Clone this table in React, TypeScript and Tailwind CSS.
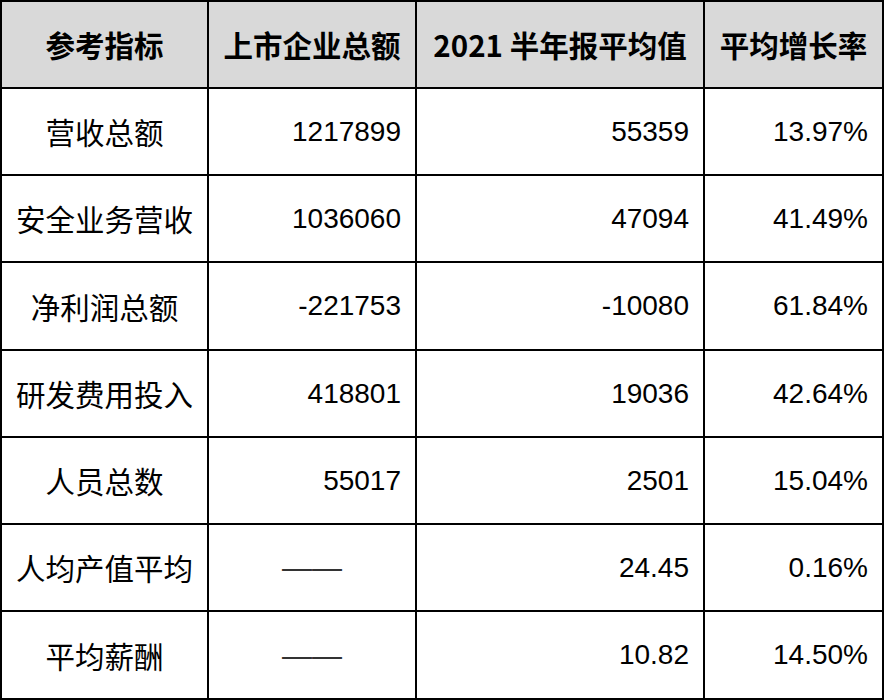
import React from "react";

const rows: [string, string, string, string][] = [
  ["营收总额", "1217899", "55359", "13.97%"],
  ["安全业务营收", "1036060", "47094", "41.49%"],
  ["净利润总额", "-221753", "-10080", "61.84%"],
  ["研发费用投入", "418801", "19036", "42.64%"],
  ["人员总数", "55017", "2501", "15.04%"],
  ["人均产值平均", "——", "24.45", "0.16%"],
  ["平均薪酬", "——", "10.82", "14.50%"],
];

const headers = ["参考指标", "上市企业总额", "2021 半年报平均值", "平均增长率"];

export default function App() {
  return (
    <div
      className="w-[884px] h-[700px] bg-white text-black"
      style={{ fontFamily: '"Liberation Sans", "Noto Sans CJK SC", sans-serif' }}
    >
      <div className="grid grid-cols-[207px_208px_288px_179px] grid-rows-[87px_87px_87px_88px_87px_87px_87px_88px] border-l-2 border-t-2 border-black">
        {headers.map((h) => (
          <div
            key={h}
            className="flex items-center justify-center border-r-2 border-b-2 border-black bg-[#d9d9d9] text-[29.5px] font-bold whitespace-nowrap"
            style={{ fontFamily: '"Noto Sans CJK SC", sans-serif' }}
          >
            {h}
          </div>
        ))}
        {rows.map((r) => (
          <React.Fragment key={r[0]}>
            <div
              className="flex items-center justify-center border-r-2 border-b-2 border-black text-[29.5px] whitespace-nowrap"
              style={{ fontFamily: '"Noto Sans CJK SC", sans-serif' }}
            >
              {r[0]}
            </div>
            {r[1] === "——" ? (
              <div className="flex items-center justify-center border-r-2 border-b-2 border-black text-[30px]">
                <span className="text-[#333]" style={{ fontFamily: '"Liberation Sans", sans-serif' }}>——</span>
              </div>
            ) : (
              <div className="flex items-center justify-end pr-[14px] border-r-2 border-b-2 border-black text-[28px]">
                {r[1]}
              </div>
            )}
            <div className="flex items-center justify-end pr-[14px] border-r-2 border-b-2 border-black text-[28px]">
              {r[2]}
            </div>
            <div className="flex items-center justify-end pr-[14px] border-r-2 border-b-2 border-black text-[28px]">
              {r[3]}
            </div>
          </React.Fragment>
        ))}
      </div>
    </div>
  );
}
